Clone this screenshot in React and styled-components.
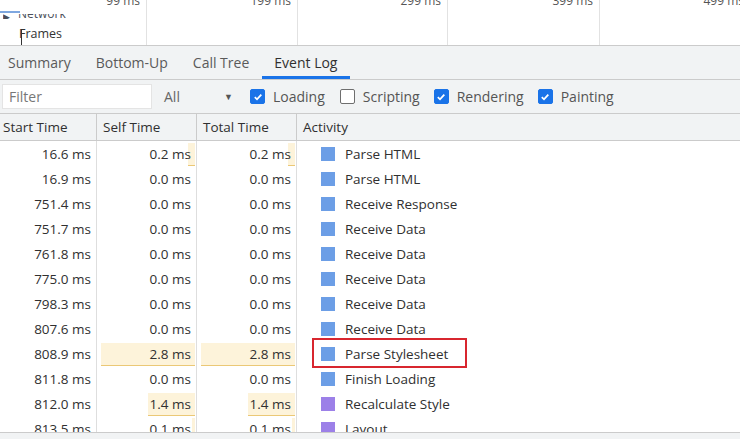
import styled, { createGlobalStyle } from "styled-components";

const GlobalStyle = createGlobalStyle`
  body {
    margin: 0;
    background: #fff;
    font-family: "Open Sans", "Noto Sans", sans-serif;
  }
`;

const Root = styled.div`
  width: 740px;
  height: 439px;
  overflow: hidden;
  display: flex;
  flex-direction: column;
  color: #303030;
  font-size: 13.5px;
`;

const Timeline = styled.div`
  position: relative;
  height: 45px;
  flex-shrink: 0;
  display: flex;
  background: #fff;
  border-bottom: 1px solid #cbcbcb;
  overflow: hidden;
`;

const TickCell = styled.div`
  flex-shrink: 0;
  width: ${(p) => p.w}px;
  border-right: 1px solid #e2e2e2;
  text-align: right;
  padding-right: 6px;
  box-sizing: border-box;
  font-size: 12px;
  line-height: 14px;
  color: #555;
  margin-top: -6px;
  height: 61px;
`;

const TrackLine = styled.div`
  position: absolute;
  left: 0;
  top: 11px;
  width: 20px;
  height: 2px;
  background: #7ea7e0;
`;

const ClippedTrack = styled.div`
  position: absolute;
  left: 3px;
  top: 14px;
  height: 5px;
  overflow: hidden;
  display: flex;
  gap: 8px;
  font-size: 12px;
  line-height: 12px;
  color: #4a4f5a;
  span {
    margin-top: -6px;
  }
  span:first-child {
    font-size: 9px;
    margin-top: -3px;
  }
`;

const FramesLabel = styled.div`
  position: absolute;
  left: 19px;
  top: 25px;
  font-size: 12.5px;
  color: #333;
`;

const Caret = styled.div`
  position: absolute;
  left: 21px;
  top: 30px;
  width: 1px;
  height: 15px;
  background: #333;
`;

const TabBar = styled.div`
  height: 33px;
  flex-shrink: 0;
  display: flex;
  background: #f1f3f4;
  border-bottom: 1px solid #cbcbcb;
`;

const Tab = styled.div`
  padding: 0 12.5px;
  display: flex;
  align-items: center;
  font-size: 14px;
  color: ${(p) => (p.active ? "#303030" : "#5a5a5a")};
  border-bottom: 3px solid ${(p) => (p.active ? "#1a73e8" : "transparent")};
  padding-top: 3px;
  &:first-child {
    padding-left: 8px;
  }
`;

const Toolbar = styled.div`
  height: 33px;
  flex-shrink: 0;
  display: flex;
  align-items: center;
  background: #f1f3f4;
  border-bottom: 1px solid #cbcbcb;
  padding-left: 2px;
`;

const FilterInput = styled.div`
  width: 150px;
  height: 25px;
  box-sizing: border-box;
  background: #fff;
  border: 1px solid #e4e4e4;
  display: flex;
  align-items: center;
  padding-left: 6px;
  color: #777;
  font-size: 14px;
`;

const Select = styled.div`
  width: 86px;
  margin-left: 12px;
  display: flex;
  justify-content: space-between;
  align-items: center;
  color: #666;
  padding-right: 17px;
  box-sizing: border-box;
  font-size: 14px;
`;

const Arrow = styled.span`
  font-size: 9px;
  color: #555;
`;

const CheckLabel = styled.label`
  display: flex;
  align-items: center;
  gap: 8px;
  margin-left: ${(p) => p.ml}px;
  color: #555;
  font-size: 14px;
`;

const Box = styled.span`
  width: 15px;
  height: 15px;
  box-sizing: border-box;
  border-radius: 2px;
  display: flex;
  align-items: center;
  justify-content: center;
  background: ${(p) => (p.checked ? "#1a73e8" : "#fff")};
  border: 1px solid ${(p) => (p.checked ? "#1a73e8" : "#6e6e6e")};
`;

const Grid = styled.div`
  display: grid;
  grid-template-columns: 97px 100px 100px 1fr;
`;

const HeaderRow = styled(Grid)`
  height: 26px;
  flex-shrink: 0;
  background: #f1f3f4;
  border-bottom: 1px solid #cbcbcb;
`;

const HeadCell = styled.div`
  display: flex;
  align-items: center;
  padding-left: ${(p) => (p.first ? 3 : 6)}px;
  border-right: ${(p) => (p.last ? "none" : "1px solid #cbcbcb")};
  font-size: 13.5px;
  color: #303030;
`;

const Body = styled.div`
  flex: 1;
  overflow: hidden;
  background: #fff;
`;

const Row = styled(Grid)`
  height: 25px;
`;

const NumCell = styled.div`
  position: relative;
  display: flex;
  align-items: center;
  justify-content: flex-end;
  padding-right: 5px;
  border-right: 1px solid #dedede;
`;

const Bar = styled.div`
  position: absolute;
  right: 1px;
  top: 2px;
  bottom: 0;
  background: #fdf3da;
  border-bottom: 1px solid #ebc876;
`;

const NumText = styled.span`
  position: relative;
`;

const ActivityCell = styled.div`
  display: flex;
  align-items: center;
  padding-left: 24px;
`;

const Swatch = styled.span`
  width: 14px;
  height: 14px;
  background: ${(p) => p.color};
  margin-right: 10px;
  flex-shrink: 0;
`;

const Highlighted = styled.span`
  position: relative;
  &::before {
    content: "";
    position: absolute;
    left: -33px;
    right: -19px;
    top: -7px;
    bottom: -5px;
    border: 2px solid #d8262f;
  }
`;

const Footer = styled.div`
  height: 6px;
  flex-shrink: 0;
  background: #f1f3f4;
  border-top: 1px solid #cbcbcb;
`;

const BLUE = "#6c9ee6";
const PURPLE = "#9c80e8";

const rows = [
  ["16.6 ms", 0.2, 0.2, "Parse HTML", BLUE],
  ["16.9 ms", 0.0, 0.0, "Parse HTML", BLUE],
  ["751.4 ms", 0.0, 0.0, "Receive Response", BLUE],
  ["751.7 ms", 0.0, 0.0, "Receive Data", BLUE],
  ["761.8 ms", 0.0, 0.0, "Receive Data", BLUE],
  ["775.0 ms", 0.0, 0.0, "Receive Data", BLUE],
  ["798.3 ms", 0.0, 0.0, "Receive Data", BLUE],
  ["807.6 ms", 0.0, 0.0, "Receive Data", BLUE],
  ["808.9 ms", 2.8, 2.8, "Parse Stylesheet", BLUE, true],
  ["811.8 ms", 0.0, 0.0, "Finish Loading", BLUE],
  ["812.0 ms", 1.4, 1.4, "Recalculate Style", PURPLE],
  ["813.5 ms", 0.1, 0.1, "Layout", PURPLE],
];

const ticks = [
  [147, "99 ms"],
  [151, "199 ms"],
  [150, "299 ms"],
  [152, "399 ms"],
  [151, "499 ms"],
];

const Check = () => (
  <svg width="10" height="10" viewBox="0 0 10 10">
    <path d="M1.8 5.2 L4 7.3 L8.3 2.6" fill="none" stroke="#fff" strokeWidth="1.8" />
  </svg>
);

const TimeCell = ({ value }) => (
  <NumCell>
    {value > 0 && <Bar style={{ width: Math.max(3, (value / 2.8) * 94) }} />}
    <NumText>{value.toFixed(1)} ms</NumText>
  </NumCell>
);

const Filter = ({ label, checked, ml }) => (
  <CheckLabel ml={ml}>
    <Box checked={checked}>{checked && <Check />}</Box>
    {label}
  </CheckLabel>
);

export default function App() {
  return (
    <Root>
      <GlobalStyle />
      <Timeline>
        {ticks.map(([w, t]) => (
          <TickCell key={t} w={w}>{t}</TickCell>
        ))}
        <TrackLine />
        <ClippedTrack>
          <span>▶</span>
          <span>Network</span>
        </ClippedTrack>
        <FramesLabel>Frames</FramesLabel>
        <Caret />
      </Timeline>
      <TabBar>
        <Tab>Summary</Tab>
        <Tab>Bottom-Up</Tab>
        <Tab>Call Tree</Tab>
        <Tab active>Event Log</Tab>
      </TabBar>
      <Toolbar>
        <FilterInput>Filter</FilterInput>
        <Select>
          All
          <Arrow>▼</Arrow>
        </Select>
        <Filter label="Loading" checked ml={0} />
        <Filter label="Scripting" ml={15} />
        <Filter label="Rendering" checked ml={14} />
        <Filter label="Painting" checked ml={14} />
      </Toolbar>
      <HeaderRow>
        <HeadCell first>Start Time</HeadCell>
        <HeadCell>Self Time</HeadCell>
        <HeadCell>Total Time</HeadCell>
        <HeadCell last>Activity</HeadCell>
      </HeaderRow>
      <Body>
        {rows.map(([start, self, total, name, color, mark], i) => (
          <Row key={i}>
            <NumCell>{start}</NumCell>
            <TimeCell value={self} />
            <TimeCell value={total} />
            <ActivityCell>
              <Swatch color={color} />
              {mark ? <Highlighted>{name}</Highlighted> : name}
            </ActivityCell>
          </Row>
        ))}
      </Body>
      <Footer />
    </Root>
  );
}
